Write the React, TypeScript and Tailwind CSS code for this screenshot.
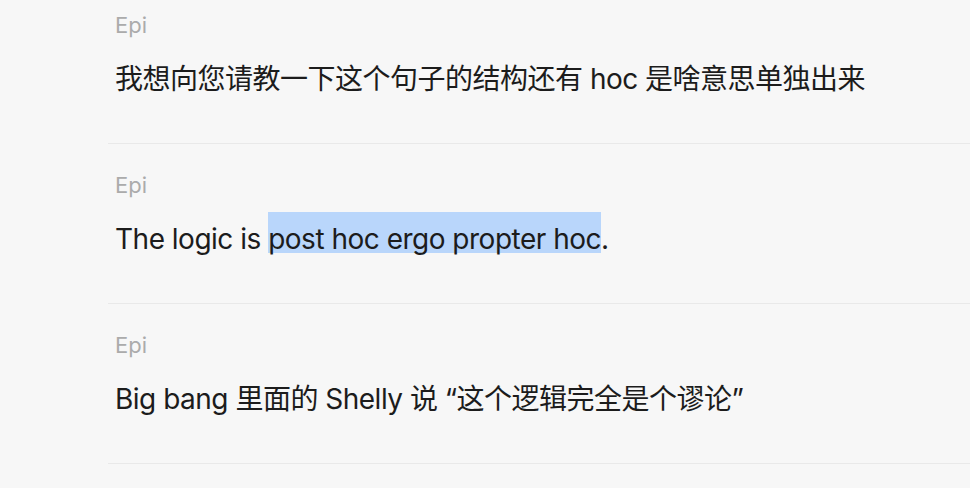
import React from "react"

type Message = {
  author: string
  body: React.ReactNode
}

const messages: Message[] = [
  {
    author: "Epi",
    body: "我想向您请教一下这个句子的结构还有 hoc 是啥意思单独出来",
  },
  {
    author: "Epi",
    body: (
      <>
        The logic is{" "}
        <span className="bg-[linear-gradient(to_bottom,#b9d6fb_calc(100%-3px),transparent_calc(100%-3px))] pt-[10px]">
          post hoc ergo propter hoc
        </span>
        .
      </>
    ),
  },
  {
    author: "Epi",
    body: "Big bang 里面的 Shelly 说 “这个逻辑完全是个谬论”",
  },
]

export default function App() {
  return (
    <div
      className="h-[488px] w-[970px] overflow-hidden bg-[#f7f7f7]"
      style={{ fontFamily: 'Inter, "Noto Sans CJK SC", sans-serif' }}
    >
      <div className="-mt-[16px] ml-[108px]">
        {messages.map((m, i) => (
          <div key={i} className="border-b border-[#e9e9e9] pl-[7px] pt-[27px] pb-[43px]">
            <div className="text-[22px] leading-[28px] text-[#ababab]">{m.author}</div>
            <div className="mt-[19px] text-[28px] leading-[42px] tracking-[-0.5px] text-[#1c1c1c]">
              {m.body}
            </div>
          </div>
        ))}
      </div>
    </div>
  )
}
